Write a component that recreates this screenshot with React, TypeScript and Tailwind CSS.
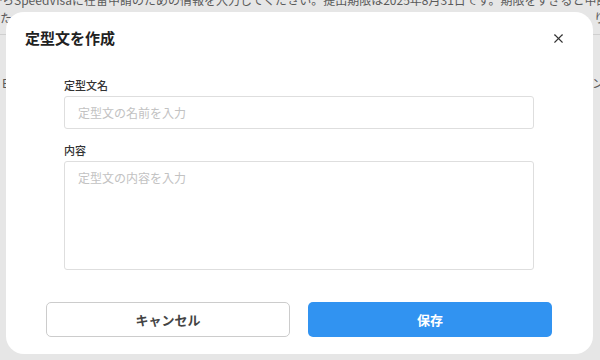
import { X } from "lucide-react";

function App() {
  return (
    <div className="relative w-[600px] h-[360px] overflow-hidden bg-[#e6e6e6] font-['Noto_Sans_CJK_JP','Noto_Sans',sans-serif]">
      {/* page behind the dialog */}
      <div className="text-[#5a5a5a] text-[12px] leading-[14px]">
        <p className="-mt-[7px] -ml-[10px] whitespace-nowrap">
          からSpeedVisaに在留申請のための情報を入力してください。提出期限は2025年8月31日です。期限をすぎると申請ができなくなります。
        </p>
        <div className="flex justify-between mt-[4px]">
          <span>た</span>
          <span className="-mr-[6px]">り</span>
        </div>
        <div className="mt-[9px] h-px bg-[#cfcfcf]" />
        <div className="flex justify-between mt-[41px] px-[2px]">
          <span>E</span>
          <span className="-mr-[6px]">ン</span>
        </div>
      </div>

      {/* dialog */}
      <div className="absolute left-[6px] top-[12px] w-[587px] h-[342px] rounded-[18px] bg-white flex flex-col">
        <div className="flex items-center justify-between pl-[19px] pr-[27px] pt-[14px]">
          <h2 className="text-[15px] leading-[24px] font-bold text-[#222]">定型文を作成</h2>
          <X className="w-[15px] h-[15px] text-[#333]" strokeWidth={1.8} />
        </div>

        <div className="ml-[58px] w-[470px] mt-[27px] flex flex-col">
          <label className="text-[11px] leading-[16px] font-medium text-[#333]">定型文名</label>
          <div className="mt-[3px] h-[33px] border border-[#dedede] rounded-[3px] px-[13px] flex items-center text-[12px] leading-[16px]">
            <span className="text-[#c2c2c2]">定型文の名前を入力</span>
          </div>

          <label className="mt-[13px] text-[11px] leading-[16px] font-medium text-[#333]">内容</label>
          <div className="mt-[3px] h-[109px] border border-[#dedede] rounded-[3px] px-[13px] pt-[8px] text-[12px] leading-[16px]">
            <span className="text-[#c2c2c2]">定型文の内容を入力</span>
          </div>
        </div>

        <div className="mt-[32px] ml-[40px] flex gap-[18px]">
          <button
            type="button"
            className="w-[244px] h-[35px] border border-[#cccccc] rounded-[5px] text-[13px] font-bold text-[#444]"
          >
            キャンセル
          </button>
          <button
            type="button"
            className="w-[244px] h-[35px] rounded-[5px] bg-[#3193f1] text-[13px] font-bold text-white"
          >
            保存
          </button>
        </div>
      </div>
    </div>
  );
}

export default App;
